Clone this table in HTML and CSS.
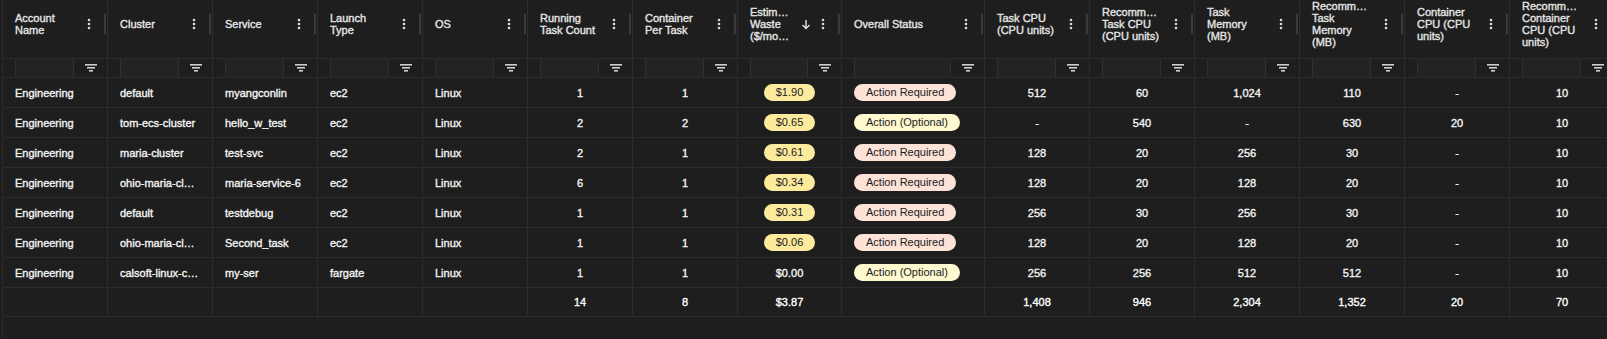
FILE: index.html
```html
<!DOCTYPE html>
<html lang="en">
<head>
<meta charset="utf-8">
<title>ECS Services</title>
<link rel="stylesheet" href="styles.css">
</head>
<body>
<div class="page">
  <div class="table">
    <div class="row head">
      <div class="hcell"><div class="label"><span>Account</span><span>Name</span></div><span class="menu"><svg viewBox="0 0 4 12" width="4" height="12"><circle cx="2" cy="2" r="1.3"/><circle cx="2" cy="6" r="1.3"/><circle cx="2" cy="10" r="1.3"/></svg></span><span class="handle"></span></div>
      <div class="hcell"><div class="label"><span>Cluster</span></div><span class="menu"><svg viewBox="0 0 4 12" width="4" height="12"><circle cx="2" cy="2" r="1.3"/><circle cx="2" cy="6" r="1.3"/><circle cx="2" cy="10" r="1.3"/></svg></span><span class="handle"></span></div>
      <div class="hcell"><div class="label"><span>Service</span></div><span class="menu"><svg viewBox="0 0 4 12" width="4" height="12"><circle cx="2" cy="2" r="1.3"/><circle cx="2" cy="6" r="1.3"/><circle cx="2" cy="10" r="1.3"/></svg></span><span class="handle"></span></div>
      <div class="hcell"><div class="label"><span>Launch</span><span>Type</span></div><span class="menu"><svg viewBox="0 0 4 12" width="4" height="12"><circle cx="2" cy="2" r="1.3"/><circle cx="2" cy="6" r="1.3"/><circle cx="2" cy="10" r="1.3"/></svg></span><span class="handle"></span></div>
      <div class="hcell"><div class="label"><span>OS</span></div><span class="menu"><svg viewBox="0 0 4 12" width="4" height="12"><circle cx="2" cy="2" r="1.3"/><circle cx="2" cy="6" r="1.3"/><circle cx="2" cy="10" r="1.3"/></svg></span><span class="handle"></span></div>
      <div class="hcell"><div class="label"><span>Running</span><span>Task Count</span></div><span class="menu"><svg viewBox="0 0 4 12" width="4" height="12"><circle cx="2" cy="2" r="1.3"/><circle cx="2" cy="6" r="1.3"/><circle cx="2" cy="10" r="1.3"/></svg></span><span class="handle"></span></div>
      <div class="hcell"><div class="label"><span>Container</span><span>Per Task</span></div><span class="menu"><svg viewBox="0 0 4 12" width="4" height="12"><circle cx="2" cy="2" r="1.3"/><circle cx="2" cy="6" r="1.3"/><circle cx="2" cy="10" r="1.3"/></svg></span><span class="handle"></span></div>
      <div class="hcell"><div class="label"><span>Estim…</span><span>Waste</span><span>($/mo…</span></div><span class="sort"><svg viewBox="0 0 10 11" width="10" height="11"><path d="M5 1V9.5M1.5 6L5 9.5L8.5 6"/></svg></span><span class="menu"><svg viewBox="0 0 4 12" width="4" height="12"><circle cx="2" cy="2" r="1.3"/><circle cx="2" cy="6" r="1.3"/><circle cx="2" cy="10" r="1.3"/></svg></span><span class="handle"></span></div>
      <div class="hcell"><div class="label"><span>Overall Status</span></div><span class="menu"><svg viewBox="0 0 4 12" width="4" height="12"><circle cx="2" cy="2" r="1.3"/><circle cx="2" cy="6" r="1.3"/><circle cx="2" cy="10" r="1.3"/></svg></span><span class="handle"></span></div>
      <div class="hcell"><div class="label"><span>Task CPU</span><span>(CPU units)</span></div><span class="menu"><svg viewBox="0 0 4 12" width="4" height="12"><circle cx="2" cy="2" r="1.3"/><circle cx="2" cy="6" r="1.3"/><circle cx="2" cy="10" r="1.3"/></svg></span><span class="handle"></span></div>
      <div class="hcell"><div class="label"><span>Recomm…</span><span>Task CPU</span><span>(CPU units)</span></div><span class="menu"><svg viewBox="0 0 4 12" width="4" height="12"><circle cx="2" cy="2" r="1.3"/><circle cx="2" cy="6" r="1.3"/><circle cx="2" cy="10" r="1.3"/></svg></span><span class="handle"></span></div>
      <div class="hcell"><div class="label"><span>Task</span><span>Memory</span><span>(MB)</span></div><span class="menu"><svg viewBox="0 0 4 12" width="4" height="12"><circle cx="2" cy="2" r="1.3"/><circle cx="2" cy="6" r="1.3"/><circle cx="2" cy="10" r="1.3"/></svg></span><span class="handle"></span></div>
      <div class="hcell"><div class="label"><span>Recomm…</span><span>Task</span><span>Memory</span><span>(MB)</span></div><span class="menu"><svg viewBox="0 0 4 12" width="4" height="12"><circle cx="2" cy="2" r="1.3"/><circle cx="2" cy="6" r="1.3"/><circle cx="2" cy="10" r="1.3"/></svg></span><span class="handle"></span></div>
      <div class="hcell"><div class="label"><span>Container</span><span>CPU (CPU</span><span>units)</span></div><span class="menu"><svg viewBox="0 0 4 12" width="4" height="12"><circle cx="2" cy="2" r="1.3"/><circle cx="2" cy="6" r="1.3"/><circle cx="2" cy="10" r="1.3"/></svg></span><span class="handle"></span></div>
      <div class="hcell"><div class="label"><span>Recomm…</span><span>Container</span><span>CPU (CPU</span><span>units)</span></div><span class="menu"><svg viewBox="0 0 4 12" width="4" height="12"><circle cx="2" cy="2" r="1.3"/><circle cx="2" cy="6" r="1.3"/><circle cx="2" cy="10" r="1.3"/></svg></span><span class="handle"></span></div>
    </div>

    <div class="row filters">
      <div class="fcell"><span class="finput"></span><span class="fbtn"><svg viewBox="0 0 12 8" width="12" height="8"><rect x="0" y="0" width="12" height="1.6"/><rect x="2" y="3" width="8" height="1.6"/><rect x="4" y="6" width="4" height="1.6"/></svg></span></div>
      <div class="fcell"><span class="finput"></span><span class="fbtn"><svg viewBox="0 0 12 8" width="12" height="8"><rect x="0" y="0" width="12" height="1.6"/><rect x="2" y="3" width="8" height="1.6"/><rect x="4" y="6" width="4" height="1.6"/></svg></span></div>
      <div class="fcell"><span class="finput"></span><span class="fbtn"><svg viewBox="0 0 12 8" width="12" height="8"><rect x="0" y="0" width="12" height="1.6"/><rect x="2" y="3" width="8" height="1.6"/><rect x="4" y="6" width="4" height="1.6"/></svg></span></div>
      <div class="fcell"><span class="finput"></span><span class="fbtn"><svg viewBox="0 0 12 8" width="12" height="8"><rect x="0" y="0" width="12" height="1.6"/><rect x="2" y="3" width="8" height="1.6"/><rect x="4" y="6" width="4" height="1.6"/></svg></span></div>
      <div class="fcell"><span class="finput"></span><span class="fbtn"><svg viewBox="0 0 12 8" width="12" height="8"><rect x="0" y="0" width="12" height="1.6"/><rect x="2" y="3" width="8" height="1.6"/><rect x="4" y="6" width="4" height="1.6"/></svg></span></div>
      <div class="fcell"><span class="finput"></span><span class="fbtn"><svg viewBox="0 0 12 8" width="12" height="8"><rect x="0" y="0" width="12" height="1.6"/><rect x="2" y="3" width="8" height="1.6"/><rect x="4" y="6" width="4" height="1.6"/></svg></span></div>
      <div class="fcell"><span class="finput"></span><span class="fbtn"><svg viewBox="0 0 12 8" width="12" height="8"><rect x="0" y="0" width="12" height="1.6"/><rect x="2" y="3" width="8" height="1.6"/><rect x="4" y="6" width="4" height="1.6"/></svg></span></div>
      <div class="fcell"><span class="finput"></span><span class="fbtn"><svg viewBox="0 0 12 8" width="12" height="8"><rect x="0" y="0" width="12" height="1.6"/><rect x="2" y="3" width="8" height="1.6"/><rect x="4" y="6" width="4" height="1.6"/></svg></span></div>
      <div class="fcell"><span class="finput"></span><span class="fbtn"><svg viewBox="0 0 12 8" width="12" height="8"><rect x="0" y="0" width="12" height="1.6"/><rect x="2" y="3" width="8" height="1.6"/><rect x="4" y="6" width="4" height="1.6"/></svg></span></div>
      <div class="fcell"><span class="finput"></span><span class="fbtn"><svg viewBox="0 0 12 8" width="12" height="8"><rect x="0" y="0" width="12" height="1.6"/><rect x="2" y="3" width="8" height="1.6"/><rect x="4" y="6" width="4" height="1.6"/></svg></span></div>
      <div class="fcell"><span class="finput"></span><span class="fbtn"><svg viewBox="0 0 12 8" width="12" height="8"><rect x="0" y="0" width="12" height="1.6"/><rect x="2" y="3" width="8" height="1.6"/><rect x="4" y="6" width="4" height="1.6"/></svg></span></div>
      <div class="fcell"><span class="finput"></span><span class="fbtn"><svg viewBox="0 0 12 8" width="12" height="8"><rect x="0" y="0" width="12" height="1.6"/><rect x="2" y="3" width="8" height="1.6"/><rect x="4" y="6" width="4" height="1.6"/></svg></span></div>
      <div class="fcell"><span class="finput"></span><span class="fbtn"><svg viewBox="0 0 12 8" width="12" height="8"><rect x="0" y="0" width="12" height="1.6"/><rect x="2" y="3" width="8" height="1.6"/><rect x="4" y="6" width="4" height="1.6"/></svg></span></div>
      <div class="fcell"><span class="finput"></span><span class="fbtn"><svg viewBox="0 0 12 8" width="12" height="8"><rect x="0" y="0" width="12" height="1.6"/><rect x="2" y="3" width="8" height="1.6"/><rect x="4" y="6" width="4" height="1.6"/></svg></span></div>
      <div class="fcell"><span class="finput"></span><span class="fbtn"><svg viewBox="0 0 12 8" width="12" height="8"><rect x="0" y="0" width="12" height="1.6"/><rect x="2" y="3" width="8" height="1.6"/><rect x="4" y="6" width="4" height="1.6"/></svg></span></div>
    </div>

    <div class="row data">
      <div class="cell">Engineering</div><div class="cell">default</div><div class="cell">myangconlin</div><div class="cell">ec2</div><div class="cell">Linux</div>
      <div class="cell num">1</div><div class="cell num">1</div><div class="cell num"><span class="pill cost">$1.90</span></div>
      <div class="cell"><span class="pill req">Action Required</span></div>
      <div class="cell num">512</div><div class="cell num">60</div><div class="cell num">1,024</div><div class="cell num">110</div><div class="cell num">-</div><div class="cell num">10</div>
    </div>
    <div class="row data">
      <div class="cell">Engineering</div><div class="cell">tom-ecs-cluster</div><div class="cell">hello_w_test</div><div class="cell">ec2</div><div class="cell">Linux</div>
      <div class="cell num">2</div><div class="cell num">2</div><div class="cell num"><span class="pill cost">$0.65</span></div>
      <div class="cell"><span class="pill opt">Action (Optional)</span></div>
      <div class="cell num">-</div><div class="cell num">540</div><div class="cell num">-</div><div class="cell num">630</div><div class="cell num">20</div><div class="cell num">10</div>
    </div>
    <div class="row data">
      <div class="cell">Engineering</div><div class="cell">maria-cluster</div><div class="cell">test-svc</div><div class="cell">ec2</div><div class="cell">Linux</div>
      <div class="cell num">2</div><div class="cell num">1</div><div class="cell num"><span class="pill cost">$0.61</span></div>
      <div class="cell"><span class="pill req">Action Required</span></div>
      <div class="cell num">128</div><div class="cell num">20</div><div class="cell num">256</div><div class="cell num">30</div><div class="cell num">-</div><div class="cell num">10</div>
    </div>
    <div class="row data">
      <div class="cell">Engineering</div><div class="cell">ohio-maria-cl…</div><div class="cell">maria-service-6</div><div class="cell">ec2</div><div class="cell">Linux</div>
      <div class="cell num">6</div><div class="cell num">1</div><div class="cell num"><span class="pill cost">$0.34</span></div>
      <div class="cell"><span class="pill req">Action Required</span></div>
      <div class="cell num">128</div><div class="cell num">20</div><div class="cell num">128</div><div class="cell num">20</div><div class="cell num">-</div><div class="cell num">10</div>
    </div>
    <div class="row data">
      <div class="cell">Engineering</div><div class="cell">default</div><div class="cell">testdebug</div><div class="cell">ec2</div><div class="cell">Linux</div>
      <div class="cell num">1</div><div class="cell num">1</div><div class="cell num"><span class="pill cost">$0.31</span></div>
      <div class="cell"><span class="pill req">Action Required</span></div>
      <div class="cell num">256</div><div class="cell num">30</div><div class="cell num">256</div><div class="cell num">30</div><div class="cell num">-</div><div class="cell num">10</div>
    </div>
    <div class="row data">
      <div class="cell">Engineering</div><div class="cell">ohio-maria-cl…</div><div class="cell">Second_task</div><div class="cell">ec2</div><div class="cell">Linux</div>
      <div class="cell num">1</div><div class="cell num">1</div><div class="cell num"><span class="pill cost">$0.06</span></div>
      <div class="cell"><span class="pill req">Action Required</span></div>
      <div class="cell num">128</div><div class="cell num">20</div><div class="cell num">128</div><div class="cell num">20</div><div class="cell num">-</div><div class="cell num">10</div>
    </div>
    <div class="row data">
      <div class="cell">Engineering</div><div class="cell">calsoft-linux-c…</div><div class="cell">my-ser</div><div class="cell">fargate</div><div class="cell">Linux</div>
      <div class="cell num">1</div><div class="cell num">1</div><div class="cell num">$0.00</div>
      <div class="cell"><span class="pill opt">Action (Optional)</span></div>
      <div class="cell num">256</div><div class="cell num">256</div><div class="cell num">512</div><div class="cell num">512</div><div class="cell num">-</div><div class="cell num">10</div>
    </div>

    <div class="row foot">
      <div class="cell"></div><div class="cell"></div><div class="cell"></div><div class="cell"></div><div class="cell"></div>
      <div class="cell num">14</div><div class="cell num">8</div><div class="cell num">$3.87</div>
      <div class="cell"></div>
      <div class="cell num">1,408</div><div class="cell num">946</div><div class="cell num">2,304</div><div class="cell num">1,352</div><div class="cell num">20</div><div class="cell num">70</div>
    </div>
  </div>
</div>
</body>
</html>
```

FILE: styles.css
```css
* { box-sizing: border-box; }

html, body {
  margin: 0;
  padding: 0;
  background: #1e1e1e;
}

.page {
  height: 339px;
  width: 1607px;
  overflow: hidden;
  padding-left: 2px;
  background: #1e1e1e;
  font-family: "Liberation Sans", Arial, sans-serif;
  font-size: 11px;
  color: #f4f4f4;
}

.table {
  height: 100%;
  width: max-content;
  border-left: 1px solid #2c2c2c;
}

.row {
  display: grid;
  grid-template-columns: repeat(7, 105px) 104px 143px repeat(6, 105px);
}

/* header */
.hcell {
  height: 59px;
  border-right: 1px solid #2c2c2c;
  border-bottom: 1px solid #2c2c2c;
  padding: 0 1px 10px 12px;
  display: flex;
  align-items: center;
  color: #e6e6e6;
}

.label {
  flex: 1;
  min-width: 0;
  display: flex;
  flex-direction: column;
  line-height: 12px;
  -webkit-text-stroke: 0.35px currentColor;
}

.label span {
  white-space: nowrap;
}

.menu {
  width: 16px;
  height: 16px;
  display: flex;
  align-items: center;
  justify-content: center;
  margin-right: 7px;
}

.menu svg { fill: #dcdcdc; }

.sort {
  width: 10px;
  height: 16px;
  display: flex;
  align-items: center;
  justify-content: center;
  margin-right: 4px;
}

.sort svg {
  fill: none;
  stroke: #dcdcdc;
  stroke-width: 1.5;
}

.handle {
  width: 2px;
  height: 20px;
  background: #3a3a3a;
}

/* filter row */
.fcell {
  height: 19px;
  border-right: 1px solid #2c2c2c;
  border-bottom: 1px solid #2c2c2c;
  padding-left: 12px;
  display: flex;
}

.finput {
  flex: 1;
  background: #232323;
  border-left: 1px solid #303030;
  border-right: 1px solid #303030;
}

.fbtn {
  width: 33px;
  display: flex;
  align-items: center;
  justify-content: center;
}

.fbtn svg { fill: #cfcfcf; }

/* data rows */
.cell {
  height: 30px;
  border-right: 1px solid #2c2c2c;
  border-bottom: 1px solid #2c2c2c;
  padding: 0 12px;
  display: flex;
  align-items: center;
  white-space: nowrap;
  -webkit-text-stroke: 0.35px currentColor;
}

.foot .cell {
  height: 29px;
  color: #ffffff;
}

.cell.num {
  justify-content: center;
}

.pill {
  display: inline-block;
  height: 17px;
  line-height: 17px;
  padding: 0 12px;
  border-radius: 9px;
  color: #1b1b1b;
  -webkit-text-stroke: 0;
}

.pill.cost { background: #fcea9d; }
.pill.req { background: #fde2d8; }
.pill.opt { background: #fef9cf; }
```
